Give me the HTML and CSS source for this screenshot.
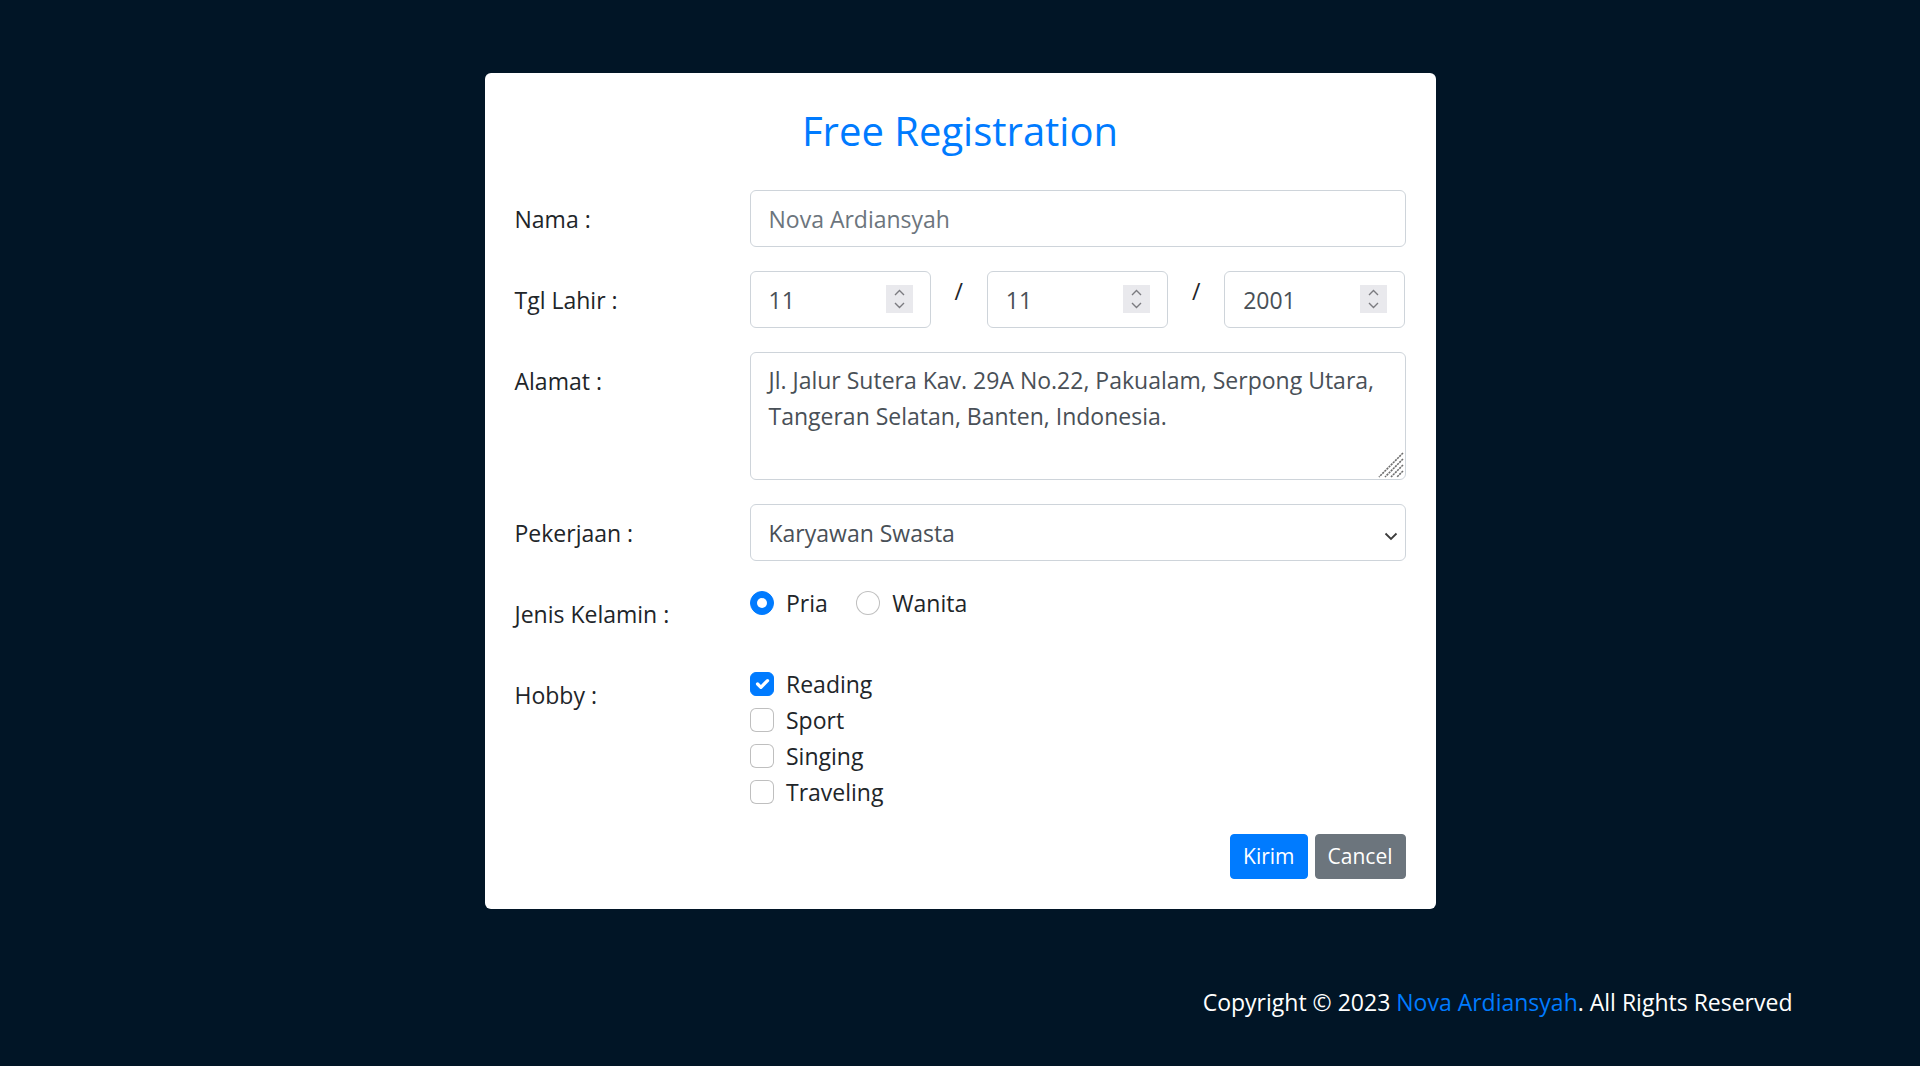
FILE: index.html
```html
<!DOCTYPE html>
<html lang="id">
<head>
<meta charset="utf-8">
<title>Free Registration</title>
<link rel="stylesheet" href="styles.css">
</head>
<body>
<main class="page">
  <form class="card">
    <h2 class="title">Free Registration</h2>

    <div class="row">
      <label class="label" for="nama">Nama :</label>
      <div class="field">
        <input id="nama" class="control" type="text" placeholder="Nova Ardiansyah">
      </div>
    </div>

    <div class="row">
      <label class="label">Tgl Lahir :</label>
      <div class="field date-grid">
        <div class="spin-wrap">
          <input class="control" type="text" value="11">
          <span class="spinner"><svg width="27" height="28" viewBox="0 0 27 28"><path d="M9 10l4.5-4.5L18 10" fill="none" stroke="#7b7b80" stroke-width="1.4"/><path d="M9 18l4.5 4.5L18 18" fill="none" stroke="#7b7b80" stroke-width="1.4"/></svg></span>
        </div>
        <span class="slash">/</span>
        <div class="spin-wrap">
          <input class="control" type="text" value="11">
          <span class="spinner"><svg width="27" height="28" viewBox="0 0 27 28"><path d="M9 10l4.5-4.5L18 10" fill="none" stroke="#7b7b80" stroke-width="1.4"/><path d="M9 18l4.5 4.5L18 18" fill="none" stroke="#7b7b80" stroke-width="1.4"/></svg></span>
        </div>
        <span class="slash">/</span>
        <div class="spin-wrap">
          <input class="control" type="text" value="2001">
          <span class="spinner"><svg width="27" height="28" viewBox="0 0 27 28"><path d="M9 10l4.5-4.5L18 10" fill="none" stroke="#7b7b80" stroke-width="1.4"/><path d="M9 18l4.5 4.5L18 18" fill="none" stroke="#7b7b80" stroke-width="1.4"/></svg></span>
        </div>
      </div>
    </div>

    <div class="row">
      <label class="label" for="alamat">Alamat :</label>
      <div class="field area-wrap">
        <textarea id="alamat" class="control area" rows="3">Jl. Jalur Sutera Kav. 29A No.22, Pakualam, Serpong Utara, Tangeran Selatan, Banten, Indonesia.</textarea>
        <svg class="grip" width="26" height="26" viewBox="0 0 26 26"><path d="M25 1L1 25M25 7L7 25M25 13L13 25M25 19L19 25" fill="none" stroke="#6e6e6e" stroke-width="1.6" stroke-dasharray="2.2 0.8"/></svg>
      </div>
    </div>

    <div class="row">
      <label class="label" for="kerja">Pekerjaan :</label>
      <div class="field select-wrap">
        <select id="kerja" class="control select">
          <option>Karyawan Swasta</option>
        </select>
        <svg class="chev" width="14" height="9" viewBox="0 0 14 9"><path d="M1.5 1.5L7 7l5.5-5.5" fill="none" stroke="#3c3c3c" stroke-width="1.8"/></svg>
      </div>
    </div>

    <div class="row">
      <span class="label">Jenis Kelamin :</span>
      <div class="field inline-checks">
        <label class="check"><span class="box radio on"></span>Pria</label>
        <label class="check"><span class="box radio"></span>Wanita</label>
      </div>
    </div>

    <div class="row">
      <span class="label">Hobby :</span>
      <div class="field">
        <label class="check"><span class="box cb on"><svg width="24" height="24" viewBox="0 0 20 20"><path d="M6 10l3 3l6-6" fill="none" stroke="#fff" stroke-width="3" stroke-linecap="round" stroke-linejoin="round"/></svg></span>Reading</label>
        <label class="check"><span class="box cb"></span>Sport</label>
        <label class="check"><span class="box cb"></span>Singing</label>
        <label class="check"><span class="box cb"></span>Traveling</label>
      </div>
    </div>

    <div class="actions">
      <button type="button" class="btn btn-primary">Kirim</button>
      <button type="button" class="btn btn-secondary">Cancel</button>
    </div>
  </form>

  <footer class="footer">
    <p>Copyright © 2023 <a href="#">Nova Ardiansyah</a>. All Rights Reserved</p>
  </footer>
</main>
</body>
</html>
```

FILE: styles.css
```css
html, body {
  margin: 0;
  padding: 0;
}

body {
  background: #011526;
  font-family: "Open Sans", "Noto Sans", sans-serif;
  font-size: 23px;
  line-height: 36px;
  color: #212529;
  min-height: 1066px;
}

.page {
  padding-top: 73px;
}

.card {
  width: 951px;
  box-sizing: border-box;
  margin: 0 auto;
  background: #fff;
  border-radius: 6px;
  padding: 30px;
}

.title {
  margin: 0 0 34px;
  padding-top: 3px;
  text-align: center;
  font-size: 40px;
  line-height: 50px;
  font-weight: 400;
  color: #007bff;
}

.row {
  display: grid;
  grid-template-columns: 235px 656px;
  margin-bottom: 24px;
}

.label {
  padding: 10.5px 0;
  line-height: 36px;
}

.control {
  display: block;
  width: 100%;
  box-sizing: border-box;
  height: 57px;
  margin: 0;
  padding: 9px 18px;
  font-family: inherit;
  font-size: 23px;
  line-height: 36px;
  color: #495057;
  background: #fff;
  border: 1px solid #ced4da;
  border-radius: 6px;
  outline: none;
}

.control::placeholder {
  color: #6c757d;
  opacity: 1;
}

.date-grid {
  display: grid;
  grid-template-columns: 1fr 56px 1fr 56px 1fr;
}

.spin-wrap {
  position: relative;
}

.spinner {
  position: absolute;
  right: 18px;
  top: 14px;
  width: 27px;
  height: 28px;
  background: #e9e9ed;
  display: flex;
}

.slash {
  text-align: center;
  padding-top: 2px;
  color: #212529;
}

.area-wrap {
  position: relative;
}

.area {
  height: 128px;
  resize: none;
  overflow: hidden;
}

.grip {
  position: absolute;
  right: 2px;
  bottom: 2px;
  pointer-events: none;
}

.select-wrap {
  position: relative;
}

.select {
  appearance: none;
  -webkit-appearance: none;
  padding-right: 40px;
}

.chev {
  position: absolute;
  right: 8px;
  top: 28px;
  pointer-events: none;
}

.inline-checks {
  display: flex;
  gap: 28px;
  align-items: flex-start;
}

.check {
  display: flex;
  align-items: flex-start;
  height: 36px;
  line-height: 36px;
}

.box {
  width: 24px;
  height: 24px;
  box-sizing: border-box;
  margin: 6px 12.5px 0 0;
  border: 1px solid rgba(0, 0, 0, 0.25);
  background: #fff;
  flex: none;
  display: flex;
  align-items: center;
  justify-content: center;
}

.radio {
  border-radius: 50%;
}

.radio.on {
  background: #007bff;
  border-color: #007bff;
}

.radio.on::after {
  content: "";
  width: 10px;
  height: 10px;
  border-radius: 50%;
  background: #fff;
}

.cb {
  border-radius: 6px;
}

.cb.on {
  background: #007bff;
  border-color: #007bff;
}

.actions {
  display: flex;
  justify-content: flex-end;
  gap: 7px;
}

.btn {
  font-family: inherit;
  font-size: 21px;
  line-height: 31px;
  padding: 6px 12px;
  border: 1px solid transparent;
  border-radius: 4px;
  color: #fff;
  cursor: pointer;
}

.btn-primary {
  background: #007bff;
  border-color: #007bff;
}

.btn-secondary {
  background: #6c757d;
  border-color: #6c757d;
}

.footer {
  width: 1665px;
  margin: 75px auto 0;
  text-align: right;
  color: #fff;
}

.footer p {
  margin: 0;
}

.footer a {
  color: #007bff;
  text-decoration: none;
}
```
